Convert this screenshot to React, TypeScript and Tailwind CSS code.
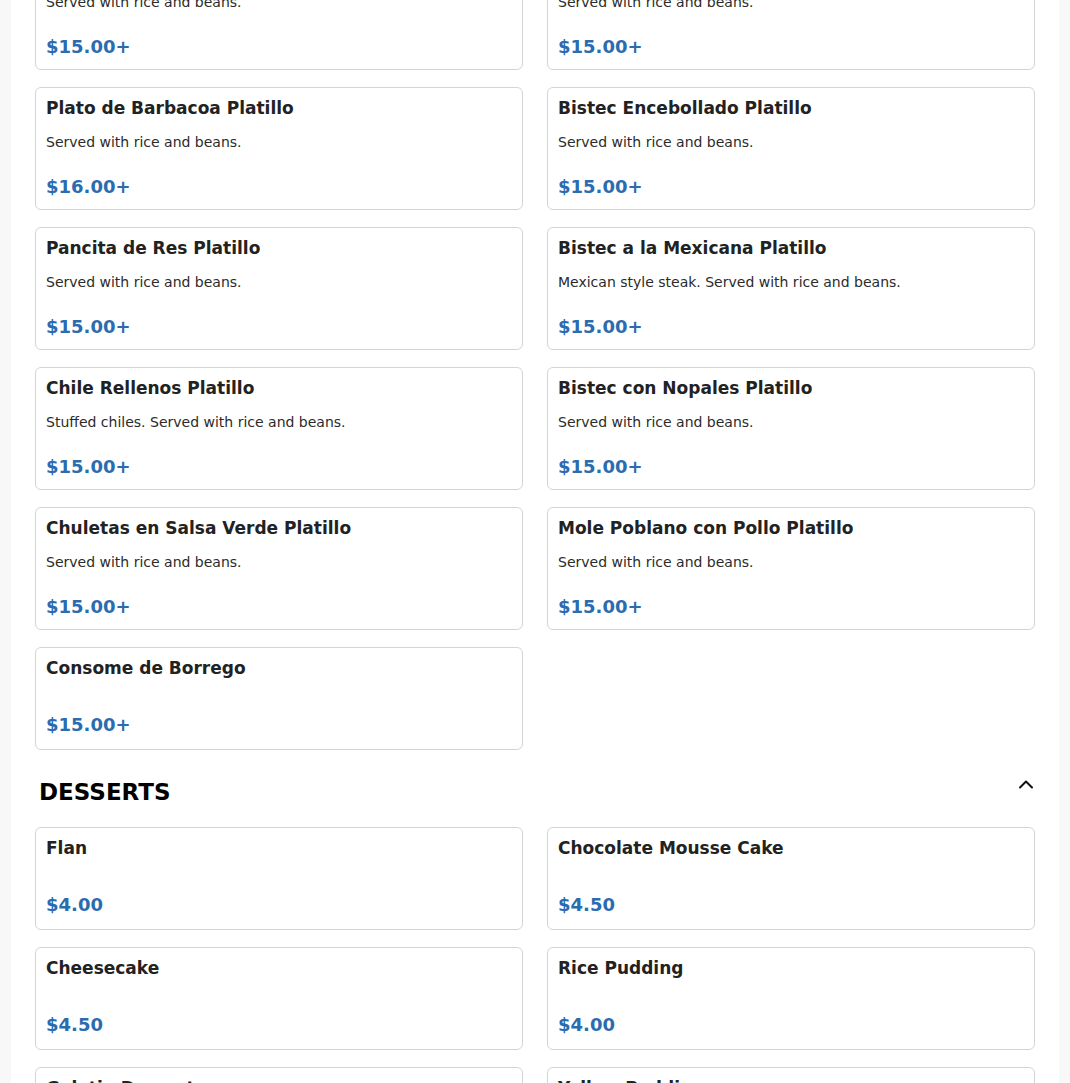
import React from "react";

type Item = { name: string; desc?: string; price: string };

const platillos: Item[] = [
  { name: "Plato de Pollo Platillo", desc: "Served with rice and beans.", price: "$15.00+" },
  { name: "Bistec Ranchero Platillo", desc: "Served with rice and beans.", price: "$15.00+" },
  { name: "Plato de Barbacoa Platillo", desc: "Served with rice and beans.", price: "$16.00+" },
  { name: "Bistec Encebollado Platillo", desc: "Served with rice and beans.", price: "$15.00+" },
  { name: "Pancita de Res Platillo", desc: "Served with rice and beans.", price: "$15.00+" },
  { name: "Bistec a la Mexicana Platillo", desc: "Mexican style steak. Served with rice and beans.", price: "$15.00+" },
  { name: "Chile Rellenos Platillo", desc: "Stuffed chiles. Served with rice and beans.", price: "$15.00+" },
  { name: "Bistec con Nopales Platillo", desc: "Served with rice and beans.", price: "$15.00+" },
  { name: "Chuletas en Salsa Verde Platillo", desc: "Served with rice and beans.", price: "$15.00+" },
  { name: "Mole Poblano con Pollo Platillo", desc: "Served with rice and beans.", price: "$15.00+" },
  { name: "Consome de Borrego", price: "$15.00+" },
];

const desserts: Item[] = [
  { name: "Flan", price: "$4.00" },
  { name: "Chocolate Mousse Cake", price: "$4.50" },
  { name: "Cheesecake", price: "$4.50" },
  { name: "Rice Pudding", price: "$4.00" },
  { name: "Gelatin Dessert", price: "$4.00" },
  { name: "Yellow Pudding", price: "$4.00" },
];

function Card({ item }: { item: Item }) {
  return (
    <div
      className={
        item.desc
          ? "flex flex-col rounded-md border border-[#d4d4d4] bg-white px-[10px] pt-[10px] pb-[12px]"
          : "flex flex-col rounded-md border border-[#d4d4d4] bg-white px-[10px] pt-[10px] pb-[14px]"
      }
    >
      <div className="text-[17px] leading-[20px] font-bold text-[#222222]">{item.name}</div>
      {item.desc ? (
        <div className="mt-[14px] text-[14px] leading-[20px] text-[#2b2b2b]">{item.desc}</div>
      ) : null}
      <div
        className={
          item.desc
            ? "mt-[25px] text-[18px] leading-[20px] font-bold text-[#2b6cb0]"
            : "mt-[37px] text-[18px] leading-[20px] font-bold text-[#2b6cb0]"
        }
      >
        {item.price}
      </div>
    </div>
  );
}

function ChevronUp() {
  return (
    <svg width="16" height="10" viewBox="0 0 16 10" fill="none" className="mt-[1px]">
      <polyline points="2,8.5 8,2.5 14,8.5" stroke="#111" strokeWidth="2" strokeLinecap="round" strokeLinejoin="round" />
    </svg>
  );
}

export default function App() {
  return (
    <div className="min-h-screen overflow-hidden bg-[#f8f8f8]" style={{ fontFamily: '"DejaVu Sans", sans-serif' }}>
      <div className="mx-auto -mt-[53px] max-w-[1048px] bg-white px-6 pb-10">
        <div className="grid grid-cols-2 gap-x-6 gap-y-[17px]">
          {platillos.map((it) => (
            <Card key={it.name} item={it} />
          ))}
        </div>
        <div className="flex items-start justify-between pl-1 pr-[1px] pt-[28px] pb-[21px]">
          <h2 className="text-[23px] leading-[28px] font-bold text-black">DESSERTS</h2>
          <ChevronUp />
        </div>
        <div className="grid grid-cols-2 gap-x-6 gap-y-[17px]">
          {desserts.map((it) => (
            <Card key={it.name} item={it} />
          ))}
        </div>
      </div>
    </div>
  );
}
